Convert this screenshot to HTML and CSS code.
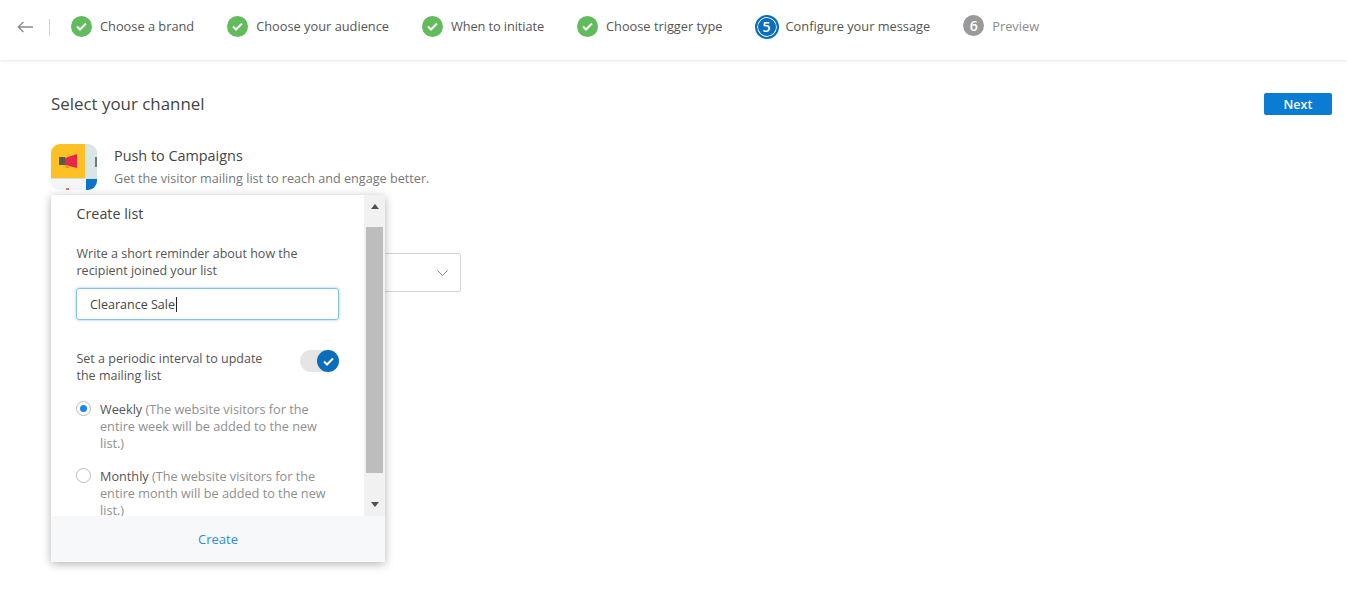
FILE: index.html
```html
<!DOCTYPE html>
<html lang="en">
<head>
<meta charset="utf-8">
<title>Configure your message</title>
<link rel="stylesheet" href="styles.css">
</head>
<body>
<header class="topbar">
  <button class="back" aria-label="Back">
    <svg width="16" height="12" viewBox="0 0 16 12" fill="none" stroke="#8a8a8a" stroke-width="1.3"><path d="M16 6H1.2M6.5 1 1.2 6l5.3 5"/></svg>
  </button>
  <span class="divider"></span>
  <ol class="steps">
    <li class="step done"><span class="badge"><svg width="11" height="9" viewBox="0 0 11 9" fill="none" stroke="#fff" stroke-width="2"><path d="M1 4.5 4 7.5 10 1.5"/></svg></span><span class="label">Choose a brand</span></li>
    <li class="step done"><span class="badge"><svg width="11" height="9" viewBox="0 0 11 9" fill="none" stroke="#fff" stroke-width="2"><path d="M1 4.5 4 7.5 10 1.5"/></svg></span><span class="label">Choose your audience</span></li>
    <li class="step done"><span class="badge"><svg width="11" height="9" viewBox="0 0 11 9" fill="none" stroke="#fff" stroke-width="2"><path d="M1 4.5 4 7.5 10 1.5"/></svg></span><span class="label tight">When to initiate</span></li>
    <li class="step done"><span class="badge"><svg width="11" height="9" viewBox="0 0 11 9" fill="none" stroke="#fff" stroke-width="2"><path d="M1 4.5 4 7.5 10 1.5"/></svg></span><span class="label">Choose trigger type</span></li>
    <li class="step active"><span class="badge">5</span><span class="label">Configure your message</span></li>
    <li class="step todo"><span class="badge">6</span><span class="label">Preview</span></li>
  </ol>
</header>
<main class="content">
  <div class="title-row">
    <h1>Select your channel</h1>
    <button class="next">Next</button>
  </div>
  <section class="channel">
    <div class="channel-icon">
      <svg width="46" height="46" viewBox="0 0 46 46">
        <rect width="34" height="35" fill="#fdc125"/>
        <rect x="34" width="12" height="35" fill="#d8e6e8"/>
        <rect x="44" y="13" width="2" height="10" fill="#777"/>
        <rect y="35" width="34" height="11" fill="#f3f5f6"/>
        <rect x="35" y="35" width="11" height="11" fill="#0b74c6"/>
        <rect y="34" width="46" height="1" fill="#dcdcc8"/>
        <rect x="15" y="44" width="3" height="2" fill="#e8736a"/>
        <path d="M14 14 26 10V24L14 21Z" fill="#e8264a"/>
        <rect x="8" y="13" width="6" height="8" fill="#5a5a4a"/>
        <path d="M14 21h3l1 3h-3z" fill="#c9a020"/>
      </svg>
    </div>
    <div>
      <h2>Push to Campaigns</h2>
      <p>Get the visitor mailing list to reach and engage better.</p>
    </div>
  </section>
  <div class="select">
    <svg width="11" height="6" viewBox="0 0 11 6" fill="none" stroke="#8a8a8a"><path d="M.5.5l5 5 5-5"/></svg>
  </div>
</main>
<aside class="popup">
  <div class="popup-body">
    <div class="popup-scroll">
      <h3>Create list</h3>
      <label class="field-label">Write a short reminder about how the recipient joined your list</label>
      <div class="input">Clearance Sale<span class="caret"></span></div>
      <div class="toggle-row">
        <span class="toggle-text">Set a periodic interval to update the mailing list</span>
        <span class="toggle"><span class="knob"><svg width="11" height="9" viewBox="0 0 11 9" fill="none" stroke="#fff" stroke-width="2"><path d="M1 4.5 4 7.5 10 1.5"/></svg></span></span>
      </div>
      <div class="radio-row">
        <span class="radio checked"></span>
        <span class="radio-text"><b>Weekly</b> (The website visitors for the entire week will be added to the new list.)</span>
      </div>
      <div class="radio-row">
        <span class="radio"></span>
        <span class="radio-text"><b>Monthly</b> (The website visitors for the entire month will be added to the new list.)</span>
      </div>
    </div>
    <div class="scrollbar">
      <span class="arrow up"></span>
      <span class="thumb"></span>
      <span class="arrow down"></span>
    </div>
  </div>
  <div class="popup-foot">Create</div>
</aside>
</body>
</html>
```
FILE: styles.css
```css
* { box-sizing: border-box; }
html, body { margin: 0; height: 100%; }
body {
  background: #fff;
  font-family: "Open Sans", "Liberation Sans", sans-serif;
  color: #444;
  overflow: hidden;
}
.topbar {
  height: 60px;
  display: flex;
  align-items: center;
  padding-left: 17px;
  background: #fff;
  box-shadow: 0 1px 3px rgba(0,0,0,.1);
}
.back {
  border: 0;
  background: none;
  padding: 0 0 6px;
  width: 16px;
  height: 18px;
  display: flex;
}
.divider {
  width: 1px;
  height: 17px;
  margin: 0 21px 6px 16px;
  background: #d5d5d5;
}
.steps {
  list-style: none;
  margin: 0;
  padding: 0 0 7px;
  display: flex;
  align-items: center;
  gap: 33px;
  font-size: 12.8px;
  color: #555;
}
.step { display: flex; align-items: center; gap: 8px; }
.label { padding-bottom: 2px; }
.tight { letter-spacing: -.1px; }
.badge {
  width: 21px;
  height: 21px;
  border-radius: 50%;
  display: flex;
  align-items: center;
  justify-content: center;
  color: #fff;
  font-weight: 600;
  font-size: 14px;
}
.done .badge { background: #62bb5d; }
.active { gap: 7px; margin-left: -1px; }
.active .badge {
  width: 24px;
  height: 24px;
  background: #0b6ebd;
  border: 2px solid #0b6ebd;
  box-shadow: inset 0 0 0 1px #fff;
}
.todo { color: #8c8c8c; }
.todo .badge { background: #999; margin-bottom: 2px; }
.content { padding: 33px 15px 0 51px; position: relative; }
.title-row { display: flex; align-items: center; justify-content: space-between; height: 22px; }
h1 { margin: 0; font-size: 16.9px; font-weight: 400; color: #444; line-height: 22px; }
.next {
  width: 68px;
  height: 22px;
  border: 0;
  border-radius: 2px;
  background: #0a7cd3;
  color: #fff;
  font: 600 12.5px "Open Sans", sans-serif;
  padding: 0;
}
.channel { display: flex; gap: 17px; margin-top: 29px; }
.channel-icon {
  width: 46px;
  height: 46px;
  border-radius: 9px;
  overflow: hidden;
  flex: none;
}
.channel-icon svg { display: block; }
h2 { margin: 2px 0 4px; font-size: 14.4px; font-weight: 400; color: #444; }
.channel p { margin: 0; font-size: 12.65px; color: #777; }
.select {
  width: 410px;
  height: 39px;
  margin-top: 63px;
  border: 1px solid #d5d5d5;
  border-radius: 2px;
  display: flex;
  align-items: center;
  justify-content: flex-end;
  padding-right: 12px;
}
.popup {
  position: absolute;
  left: 51px;
  top: 195px;
  width: 334px;
  height: 367px;
  background: #fff;
  box-shadow: 0 2px 10px rgba(0,0,0,.3);
  display: flex;
  flex-direction: column;
  border-radius: 2px;
}
.popup-body { flex: 1; min-height: 0; display: flex; }
.popup-scroll {
  flex: 1;
  overflow: hidden;
  padding: 10px 0 0 25px;
  font-size: 12.5px;
  line-height: 17px;
  color: #555;
}
h3 { margin: 0 0 22px; padding-left: .5px; font-size: 14.3px; font-weight: 400; line-height: 18px; color: #444; }
.field-label { display: block; width: 250px; padding-left: .5px; }
.input {
  width: 263px;
  height: 32px;
  margin-top: 9px;
  padding-left: 13px;
  display: flex;
  align-items: center;
  border: 1px solid #8dbdf1;
  border-radius: 3px;
  box-shadow: 0 0 3px rgba(90,160,240,.6);
  color: #444;
}
.caret { width: 1px; height: 15px; background: #222; margin-left: 1px; }
.toggle-row {
  display: flex;
  justify-content: space-between;
  width: 263px;
  margin-top: 30px;
}
.toggle-text { width: 200px; padding-left: .5px; }
.toggle {
  width: 39px;
  height: 22px;
  background: #e5e5e5;
  border-radius: 11px;
  display: flex;
  justify-content: flex-end;
  flex: none;
}
.knob {
  width: 22px;
  height: 22px;
  border-radius: 50%;
  background: #0b6ebd;
  display: flex;
  align-items: center;
  justify-content: center;
}
.radio-row { display: flex; gap: 9px; width: 263px; margin-top: 16px; font-size: 12.7px; }
.toggle-row + .radio-row { margin-top: 17px; }
.radio {
  width: 15px;
  height: 15px;
  flex: none;
  border: 1px solid #bbb;
  border-radius: 50%;
  background: #fff;
  display: flex;
  align-items: center;
  justify-content: center;
}
.radio.checked::after {
  content: "";
  width: 7px;
  height: 7px;
  border-radius: 50%;
  background: #1a86ea;
}
.radio-text { color: #8f8f8f; }
.radio-text b { font-weight: 400; color: #555; }
.scrollbar {
  width: 21px;
  flex: none;
  background: #f1f1f1;
  display: flex;
  flex-direction: column;
  align-items: center;
  padding: 0 2px;
}
.thumb { width: 17px; height: 246px; background: #bdbdbd; flex: none; }
.arrow { width: 0; height: 0; border: 4.5px solid transparent; flex: none; }
.arrow.up { border-top: 0; border-bottom: 5px solid #505050; margin: 9px 0 18px; }
.arrow.down { border-bottom: 0; border-top: 5px solid #505050; margin-top: 29px; }
.popup-foot {
  height: 46px;
  flex: none;
  padding-bottom: 1px;
  background: #f7f8fa;
  display: flex;
  align-items: center;
  justify-content: center;
  color: #2c8fdd;
  font-size: 13px;
}
```
